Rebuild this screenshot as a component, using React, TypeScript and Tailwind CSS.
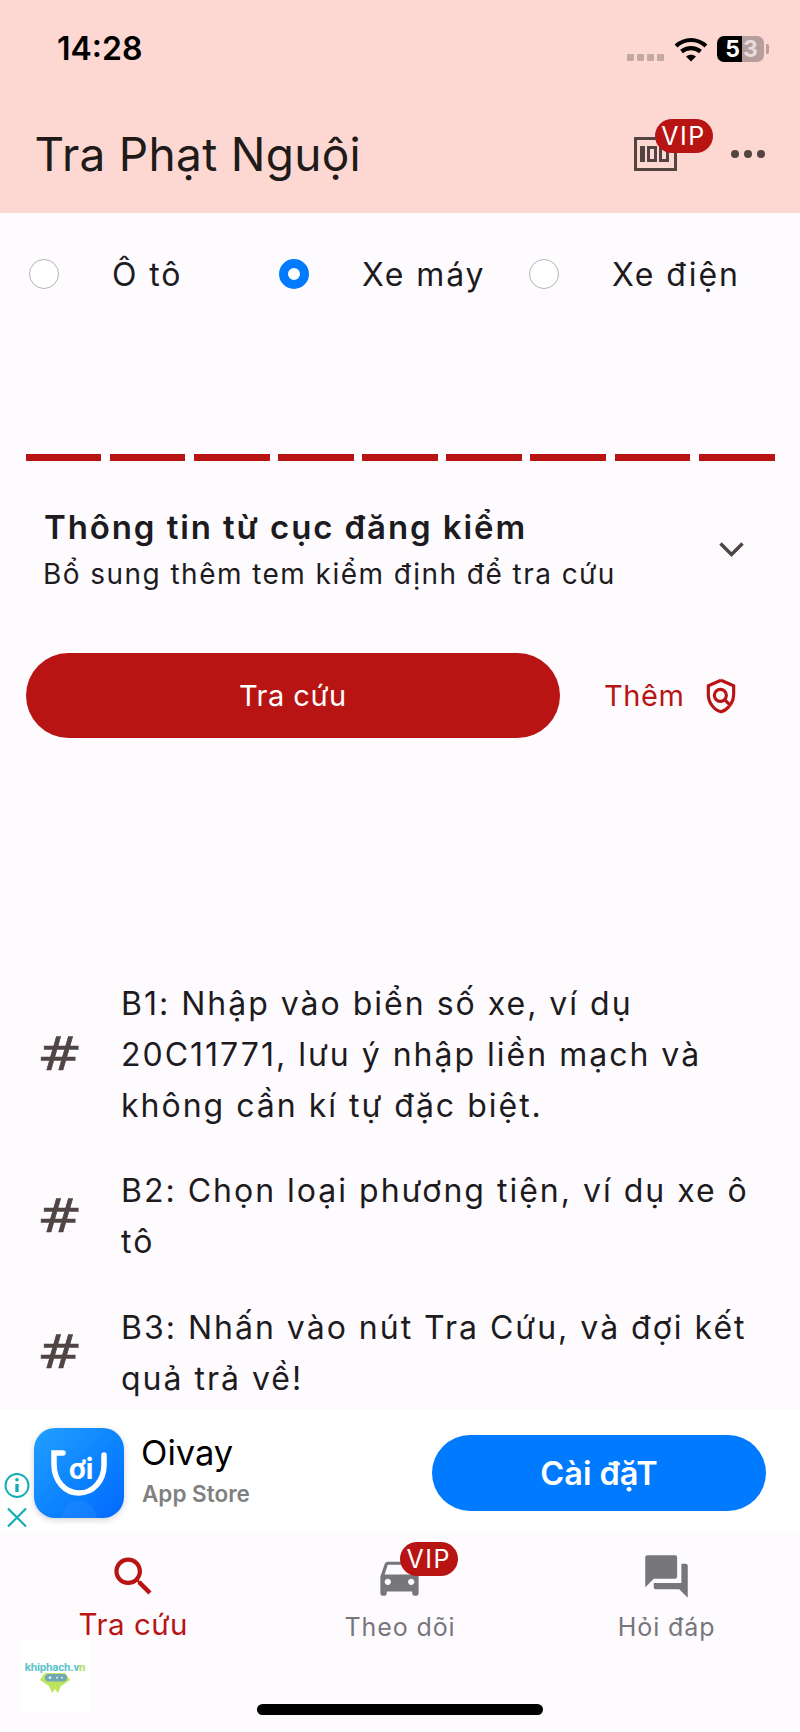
import React from "react";

const RED = "#b81414";

function VipBadge({ className = "" }: { className?: string }) {
  return (
    <div className={`absolute flex h-[34px] w-[58px] items-center justify-center rounded-[17px] bg-[#b81414] text-[25px] leading-none tracking-[1.5px] text-white ${className}`}>
      VIP
    </div>
  );
}

function Radio({ label, selected = false }: { label: string; selected?: boolean }) {
  return (
    <div className="flex w-[250px] items-center">
      {selected ? (
        <div className="h-[30px] w-[30px] rounded-full border-[9px] border-[#007aff] bg-white" />
      ) : (
        <div className="h-[30px] w-[30px] rounded-full border border-[#b5b3b7] bg-white" />
      )}
      <span className="ml-[53px] mt-[2px] text-[32px] leading-[30px] tracking-[1.9px] text-[#1d1b1e]">{label}</span>
    </div>
  );
}

function Step({ children }: { children: React.ReactNode }) {
  return (
    <div className="flex items-center pl-[37px] pr-[20px]">
      <span className="-mt-[3px] w-[84px] shrink-0 text-[47px] leading-none text-[#4f4545]">
        <span className="inline-block origin-left scale-x-[1.15] font-['DejaVu_Sans',sans-serif] [-webkit-text-stroke:0.6px_#4f4545]">#</span>
      </span>
      <p className="text-[32px] leading-[51px] tracking-[2px] text-[#1d1b1e]">{children}</p>
    </div>
  );
}

function Tab({ label, active = false, icon, badge = false }: { label: string; active?: boolean; icon: string; badge?: boolean }) {
  return (
    <div className="relative flex flex-col items-center pt-[18px]">
      <svg viewBox="0 0 24 24" width="51" height="51" fill={active ? RED : "#77767a"}>
        <path d={icon} />
      </svg>
      {badge && <VipBadge className="left-[133px] top-[9px]" />}
      <span className={active ? "mt-[1.5px] text-[29.5px] leading-[40px] tracking-[0.5px] text-[#b81414]" : "mt-[5.5px] text-[25px] leading-[38px] tracking-[0.9px] text-[#77767a]"}>
        {label}
      </span>
    </div>
  );
}

export default function App() {
  return (
    <div className="relative flex h-[1732px] w-[800px] flex-col overflow-hidden bg-[#fefbff] font-['Inter',sans-serif]">
      <header className="h-[213px] shrink-0 bg-[#fdd8d2] pt-[27px]">
        <div className="flex h-[44px] items-center justify-between pl-[57px] pr-[36px]">
          <span className="text-[32px] font-semibold leading-none text-black">14:28</span>
          <div className="flex items-center">
            <div className="mt-[16px] flex gap-[3px]">
              <i className="h-[7px] w-[7px] rounded-[1px] bg-[#c4a8a4]" />
              <i className="h-[7px] w-[7px] rounded-[1px] bg-[#c4a8a4]" />
              <i className="h-[7px] w-[7px] rounded-[1px] bg-[#c4a8a4]" />
              <i className="h-[7px] w-[7px] rounded-[1px] bg-[#c4a8a4]" />
            </div>
            <svg className="ml-[10px]" width="34" height="25" viewBox="0 0 34 25" fill="none">
              <path d="M2 9C11 1 23 1 32 9" stroke="#000" strokeWidth="4.2" />
              <path d="M7.5 14.5C13 10 21 10 26.5 14.5" stroke="#000" strokeWidth="4.2" />
              <path d="M12 19.5L17 24.5L22 19.5C19 17 15 17 12 19.5Z" fill="#000" />
            </svg>
            <div className="relative ml-[9px] flex h-[26px] w-[47px]">
              <div className="flex w-[25px] items-center justify-end rounded-l-[7px] bg-black pr-[2px] text-[23px] font-bold leading-none text-white">5</div>
              <div className="flex w-[22px] items-center justify-start rounded-r-[7px] bg-[#b59f9c] pl-[1px] text-[23px] font-bold leading-none text-[#e8dcda]">3</div>
              <div className="absolute -right-[5px] top-[8px] h-[10px] w-[3px] rounded-r-[2px] bg-[#b59f9c]" />
            </div>
          </div>
        </div>
        <div className="mt-[55px] flex h-[56px] items-center pl-[34.5px] pr-[35px]">
          <h1 className="text-[46px] font-normal leading-[56px] tracking-[0.3px] text-[#201a19]">Tra Phạt Nguội</h1>
          <div className="relative ml-auto h-[34px] w-[43px]">
            <svg width="43" height="34" viewBox="0 0 43 34" fill="none">
              <rect x="1.5" y="1.5" width="40" height="31" stroke="#534341" strokeWidth="3" />
              <rect x="6" y="9" width="5" height="16" fill="#534341" />
              <rect x="14.5" y="10.5" width="7" height="13" stroke="#534341" strokeWidth="3" />
              <rect x="26.5" y="10.5" width="7" height="13" stroke="#534341" strokeWidth="3" />
            </svg>
            <VipBadge className="left-[21px] -top-[18px]" />
          </div>
          <div className="ml-[54px] flex gap-[4.5px]">
            <i className="h-[8.5px] w-[8.5px] rounded-full bg-[#534341]" />
            <i className="h-[8.5px] w-[8.5px] rounded-full bg-[#534341]" />
            <i className="h-[8.5px] w-[8.5px] rounded-full bg-[#534341]" />
          </div>
        </div>
      </header>

      <main className="flex min-h-0 flex-1 flex-col">
        <div className="mt-[45px] flex pl-[29px]">
          <Radio label="Ô tô" />
          <Radio label="Xe máy" selected />
          <Radio label="Xe điện" />
        </div>

        <div className="mt-[164px] flex gap-[8.4px] px-[25.5px]">
          {Array.from({ length: 9 }).map((_, i) => (
            <div key={i} className="h-[7px] flex-1 bg-[#b81414]" />
          ))}
        </div>

        <div className="mt-[43px] flex items-center pl-[44px] pr-[56px]">
          <div className="flex-1">
            <div className="text-[33px] font-semibold leading-[46px] tracking-[1.9px] text-[#1d1b1e]">Thông tin từ cục đăng kiểm</div>
            <div className="-ml-[1px] mt-[4px] text-[28px] leading-[40px] tracking-[1.45px] text-[#1d1b1e]">Bổ sung thêm tem kiểm định để tra cứu</div>
          </div>
          <svg width="25" height="15" viewBox="0 0 25 15" fill="none">
            <path d="M1.5 1.5L12.5 12.5L23.5 1.5" stroke="#4f4545" strokeWidth="3.4" />
          </svg>
        </div>

        <div className="mt-[59px] flex items-center pl-[25.5px]">
          <button className="h-[85px] w-[534.5px] rounded-[43px] bg-[#b81414] text-[29px] tracking-[0.5px] text-white">Tra cứu</button>
          <span className="ml-[44px] text-[29px] tracking-[0.6px] text-[#b81414]">Thêm</span>
          <svg className="ml-[17px]" width="38" height="38" viewBox="0 0 24 24" fill="none" stroke="#b81414" strokeWidth="2">
            <path d="M12 2.1L4 5.6V11C4 16.1 7.4 20.7 12 22C14 21.5 15.8 20.2 17.2 18.5" />
            <path d="M12 2.1L20 5.6V11C20 13.2 19.4 15.2 18.3 17" />
            <circle cx="11.6" cy="11.6" r="3.8" />
            <path d="M14.4 14.4L18.4 18.4" />
          </svg>
        </div>

        <div className="mt-[239.5px] flex flex-col gap-[34.5px]">
          <Step>
            B1: Nhập vào biển số xe, ví dụ
            <br />
            20C11771, lưu ý nhập liền mạch và
            <br />
            không cần kí tự đặc biệt.
          </Step>
          <Step>
            B2: Chọn loại phương tiện, ví dụ xe ô
            <br />
            tô
          </Step>
          <Step>
            B3: Nhấn vào nút Tra Cứu, và đợi kết
            <br />
            quả trả về!
          </Step>
        </div>
      </main>

      <section className="flex h-[123px] shrink-0 items-center bg-white pr-[34px] pt-[3px]">
        <div className="flex h-[65px] w-[34px] shrink-0 translate-y-[31.5px] flex-col items-center">
          <svg width="26" height="26" viewBox="0 0 26 26" fill="none" stroke="#14adb5" strokeWidth="2">
            <circle cx="13" cy="13" r="11.5" />
            <path d="M13 11.5V19.5" strokeWidth="3.4" />
            <circle cx="13" cy="7.2" r="1.8" fill="#14adb5" stroke="none" />
          </svg>
          <svg className="mt-[8px]" width="22" height="22" viewBox="0 0 22 22" fill="none" stroke="#14adb5" strokeWidth="2.2">
            <path d="M2 2L20 20M20 2L2 20" />
          </svg>
        </div>
        <div className="h-[90px] w-[90px] shrink-0 rounded-[21px] bg-gradient-to-br from-[#22a0ff] to-[#0768ff] shadow-[0_2px_6px_rgba(0,0,0,0.18)]">
          <svg width="90" height="90" viewBox="0 0 90 90" fill="none">
            <path d="M27 90C29 78 37 73 45 73C53 73 61 78 63 90Z" fill="#fff" fillOpacity="0.06" />
            <path d="M29 25H20V36C20 53 31 65 45 65C59 65 70 53 70 37V27" stroke="#fff" strokeWidth="5.5" strokeLinecap="round" />
            <text x="47" y="51" textAnchor="middle" fill="#fff" fontSize="28" fontWeight="700" fontFamily="Inter, sans-serif">ơi</text>
          </svg>
        </div>
        <div className="ml-[17px] flex flex-col">
          <span className="-mt-[6px] text-[34.5px] leading-[42px] text-black">Oivay</span>
          <span className="ml-[1px] mt-[5px] text-[22.5px] font-semibold leading-[30px] text-[#808080]">App Store</span>
        </div>
        <button className="ml-auto h-[76px] w-[334px] rounded-[38px] bg-[#007aff] pt-[3px] text-[32.5px] font-semibold text-white">Cài đặT</button>
      </section>

      <nav className="grid h-[199px] shrink-0 grid-cols-3">
        <Tab
          label="Tra cứu"
          active
          icon="M15.5 14h-.79l-.28-.27C15.41 12.59 16 11.11 16 9.5 16 5.91 13.09 3 9.5 3S3 5.91 3 9.5 5.91 16 9.5 16c1.61 0 3.09-.59 4.23-1.57l.27.28v.79l5 4.99L20.49 19l-4.99-5zm-6 0C7.01 14 5 11.99 5 9.5S7.01 5 9.5 5 14 7.01 14 9.5 11.99 14 9.5 14z"
        />
        <Tab
          label="Theo dõi"
          badge
          icon="M18.92 6.01C18.72 5.42 18.16 5 17.5 5h-11c-.66 0-1.21.42-1.42 1.01L3 12v8c0 .55.45 1 1 1h1c.55 0 1-.45 1-1v-1h12v1c0 .55.45 1 1 1h1c.55 0 1-.45 1-1v-8l-2.08-5.99zM6.5 16c-.83 0-1.5-.67-1.5-1.5S5.67 13 6.5 13s1.5.67 1.5 1.5S7.33 16 6.5 16zm11 0c-.83 0-1.5-.67-1.5-1.5s.67-1.5 1.5-1.5 1.5.67 1.5 1.5-.67 1.5-1.5 1.5zM5 11l1.5-4.5h11L19 11H5z"
        />
        <Tab
          label="Hỏi đáp"
          icon="M21 6h-2v9H6v2c0 .55.45 1 1 1h11l4 4V7c0-.55-.45-1-1-1zm-4 6V3c0-.55-.45-1-1-1H3c-.55 0-1 .45-1 1v14l4-4h10c.55 0 1-.45 1-1z"
        />
      </nav>

      <div className="absolute bottom-[17px] left-1/2 h-[11px] w-[286px] -translate-x-1/2 rounded-full bg-black" />

      <div className="absolute left-[20px] top-[1640px] flex h-[72px] w-[70px] flex-col items-center bg-white pt-[20px] font-['Roboto',sans-serif]">
        <span className="text-[11.5px] font-bold leading-[14px] tracking-[-0.2px] text-[#5cc4cc]">
          khiphach.v<span className="text-[#b5dc5a]">n</span>
        </span>
        <svg className="-mt-[2px]" width="30" height="21" viewBox="0 0 30 21">
          <path d="M5 1H25L30 8L21 14L18 21L15 17L12 21L9 14L0 8Z" fill="#bde45e" />
          <rect x="5" y="2" width="22" height="7.5" rx="3.75" fill="#6fa8b4" />
          <circle cx="10" cy="5.75" r="1.4" fill="#d8f0f0" />
          <circle cx="17" cy="5.75" r="1" fill="#d8f0f0" />
          <circle cx="22" cy="5.75" r="1" fill="#d8f0f0" />
        </svg>
      </div>
    </div>
  );
}
